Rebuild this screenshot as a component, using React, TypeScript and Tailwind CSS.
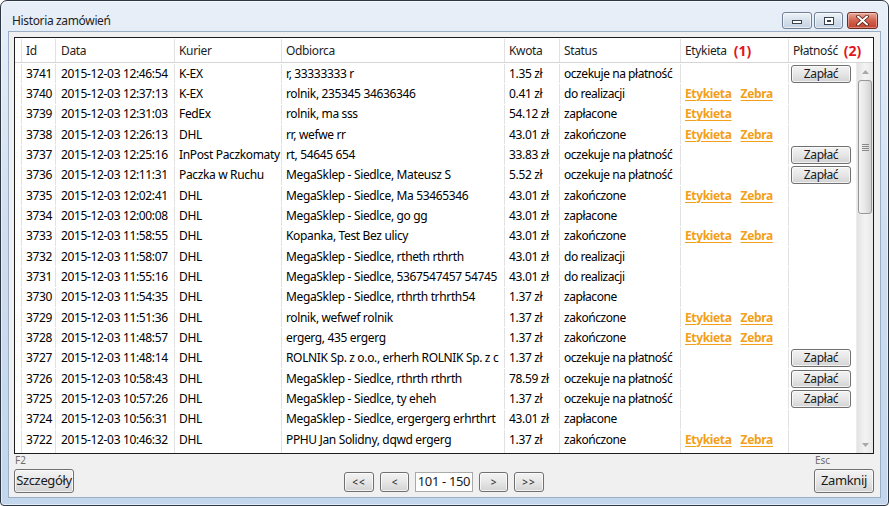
import React from "react";

type Row = {
  id: string;
  date: string;
  courier: string;
  rec: string;
  amt: string;
  status: string;
  label: 0 | 1 | 2;
  pay: boolean;
};

const rows: Row[] = [
  { id: "3741", date: "2015-12-03 12:46:54", courier: "K-EX", rec: "r, 33333333 r", amt: "1.35 zł", status: "oczekuje na płatność", label: 0, pay: true },
  { id: "3740", date: "2015-12-03 12:37:13", courier: "K-EX", rec: "rolnik, 235345 34636346", amt: "0.41 zł", status: "do realizacji", label: 2, pay: false },
  { id: "3739", date: "2015-12-03 12:31:03", courier: "FedEx", rec: "rolnik, ma sss", amt: "54.12 zł", status: "zapłacone", label: 1, pay: false },
  { id: "3738", date: "2015-12-03 12:26:13", courier: "DHL", rec: "rr, wefwe rr", amt: "43.01 zł", status: "zakończone", label: 2, pay: false },
  { id: "3737", date: "2015-12-03 12:25:16", courier: "InPost Paczkomaty", rec: "rt, 54645 654", amt: "33.83 zł", status: "oczekuje na płatność", label: 0, pay: true },
  { id: "3736", date: "2015-12-03 12:11:31", courier: "Paczka w Ruchu", rec: "MegaSklep - Siedlce, Mateusz S", amt: "5.52 zł", status: "oczekuje na płatność", label: 0, pay: true },
  { id: "3735", date: "2015-12-03 12:02:41", courier: "DHL", rec: "MegaSklep - Siedlce, Ma 53465346", amt: "43.01 zł", status: "zakończone", label: 2, pay: false },
  { id: "3734", date: "2015-12-03 12:00:08", courier: "DHL", rec: "MegaSklep - Siedlce, go gg", amt: "43.01 zł", status: "zapłacone", label: 0, pay: false },
  { id: "3733", date: "2015-12-03 11:58:55", courier: "DHL", rec: "Kopanka, Test Bez ulicy", amt: "43.01 zł", status: "zakończone", label: 2, pay: false },
  { id: "3732", date: "2015-12-03 11:58:07", courier: "DHL", rec: "MegaSklep - Siedlce, rtheth rthrth", amt: "43.01 zł", status: "do realizacji", label: 0, pay: false },
  { id: "3731", date: "2015-12-03 11:55:16", courier: "DHL", rec: "MegaSklep - Siedlce, 5367547457 54745", amt: "43.01 zł", status: "do realizacji", label: 0, pay: false },
  { id: "3730", date: "2015-12-03 11:54:35", courier: "DHL", rec: "MegaSklep - Siedlce, rthrth trhrth54", amt: "1.37 zł", status: "zapłacone", label: 0, pay: false },
  { id: "3729", date: "2015-12-03 11:51:36", courier: "DHL", rec: "rolnik, wefwef rolnik", amt: "1.37 zł", status: "zakończone", label: 2, pay: false },
  { id: "3728", date: "2015-12-03 11:48:57", courier: "DHL", rec: "ergerg, 435 ergerg", amt: "1.37 zł", status: "zakończone", label: 2, pay: false },
  { id: "3727", date: "2015-12-03 11:48:14", courier: "DHL", rec: "ROLNIK Sp. z o.o., erherh ROLNIK Sp. z c", amt: "1.37 zł", status: "oczekuje na płatność", label: 0, pay: true },
  { id: "3726", date: "2015-12-03 10:58:43", courier: "DHL", rec: "MegaSklep - Siedlce, rthrth rthrth", amt: "78.59 zł", status: "oczekuje na płatność", label: 0, pay: true },
  { id: "3725", date: "2015-12-03 10:57:26", courier: "DHL", rec: "MegaSklep - Siedlce, ty eheh", amt: "1.37 zł", status: "oczekuje na płatność", label: 0, pay: true },
  { id: "3724", date: "2015-12-03 10:56:31", courier: "DHL", rec: "MegaSklep - Siedlce, ergergerg erhrthrt", amt: "43.01 zł", status: "zapłacone", label: 0, pay: false },
  { id: "3722", date: "2015-12-03 10:46:32", courier: "DHL", rec: "PPHU Jan Solidny, dqwd ergerg", amt: "1.37 zł", status: "zakończone", label: 2, pay: false },
];

const cell = "h-full flex items-center overflow-hidden whitespace-nowrap border-r border-[#e2e2e2] pl-[4px]";

function WinButton({ children, className }: { children: React.ReactNode; className: string }) {
  return (
    <div
      className={
        "flex items-center justify-center rounded-[3px] border border-[#707070] bg-gradient-to-b from-[#f3f3f3] via-[#e6e6e6] to-[#d3d3d3] shadow-[inset_0_0_0_1px_rgba(255,255,255,0.7)] text-[#1a1a1a] " +
        className
      }
    >
      {children}
    </div>
  );
}

function Label({ kind }: { kind: 0 | 1 | 2 }) {
  if (kind === 0) return null;
  return (
    <div className="flex items-center gap-[9px] font-bold text-[#f2a01a] underline decoration-[1px] underline-offset-[2px]">
      <span>Etykieta</span>
      {kind === 2 && <span>Zebra</span>}
    </div>
  );
}

function DataRow({ r }: { r?: Row }) {
  return (
    <div className={"flex " + (r ? "h-[20.33px] shrink-0 pt-[1px]" : "flex-1 min-h-0")}>
      <div className="w-[7px] h-full border-r border-[#e2e2e2]" />
      <div className={cell + " w-[34px]"}>{r?.id}</div>
      <div className={cell + " w-[119px] pl-[5px]"}>{r?.date}</div>
      <div className={cell + " w-[107px]"}>{r?.courier}</div>
      <div className={cell + " w-[223px]"}>{r?.rec}</div>
      <div className={cell + " w-[55px]"}>{r?.amt}</div>
      <div className={cell + " w-[121px] tracking-[-0.45px]"}>{r?.status}</div>
      <div className={cell + " w-[108px] pl-[2px]"}>{r && <Label kind={r.label} />}</div>
      <div className="w-[67px] h-full flex items-center pl-[2px]">
        {r?.pay && <WinButton className="w-[60px] h-[18px] text-[12px]">Zapłać</WinButton>}
      </div>
    </div>
  );
}

function Scrollbar() {
  return (
    <div className="w-[17px] h-full flex flex-col bg-gradient-to-r from-[#e3e3e3] via-[#f3f3f3] to-[#e8e8e8] border-l border-[#ececec]">
      <div className="h-[17px] flex items-center justify-center shrink-0">
        <svg width="7" height="4" viewBox="0 0 7 4"><path d="M0 4 L3.5 0 L7 4 Z" fill="#a8a8a8" /></svg>
      </div>
      <div className="flex-1 flex flex-col">
        <div className="mx-[1px] h-[134px] rounded-[3px] border border-[#979797] bg-gradient-to-r from-[#f4f4f4] via-[#e7e7e7] to-[#d2d2d2] flex flex-col items-center justify-center gap-[1px]">
          <div className="w-[7px] h-[1px] bg-[#8a8a8a]" />
          <div className="w-[7px] h-[1px] bg-[#8a8a8a]" />
          <div className="w-[7px] h-[1px] bg-[#8a8a8a]" />
          <div className="w-[7px] h-[1px] bg-[#8a8a8a]" />
        </div>
      </div>
      <div className="h-[17px] flex items-center justify-center shrink-0">
        <svg width="7" height="4" viewBox="0 0 7 4"><path d="M0 0 L3.5 4 L7 0 Z" fill="#a8a8a8" /></svg>
      </div>
    </div>
  );
}

function CaptionButtons() {
  return (
    <div className="flex items-start mt-[11px] mr-[3px]">
      <div className="w-[30px] h-[17px] rounded-[3px] border border-[#6f7f95] bg-gradient-to-b from-[#eef3f9] via-[#d6e0ec] to-[#c4d2e3] shadow-[inset_0_0_0_1px_rgba(255,255,255,0.6)] flex items-end justify-center pb-[4px]">
        <div className="w-[10px] h-[4px] bg-white border border-[#39424e]" />
      </div>
      <div className="ml-[2px] w-[29px] h-[17px] rounded-[3px] border border-[#6f7f95] bg-gradient-to-b from-[#eef3f9] via-[#d6e0ec] to-[#c4d2e3] shadow-[inset_0_0_0_1px_rgba(255,255,255,0.6)] flex items-center justify-center">
        <div className="w-[10px] h-[8px] border border-[#39424e] bg-white flex items-center justify-center">
          <div className="w-[4px] h-[2px] border border-[#39424e] bg-[#ccd6e2]" />
        </div>
      </div>
      <div className="ml-[4px] w-[31px] h-[17px] rounded-[3px] border border-[#6b2a22] bg-gradient-to-b from-[#e9a99b] via-[#d2624e] to-[#c2412e] shadow-[inset_0_0_0_1px_rgba(255,255,255,0.35)] flex items-center justify-center">
        <svg width="13" height="11" viewBox="0 0 13 11">
          <path d="M2 1.5 L11 9.5 M11 1.5 L2 9.5" stroke="#4a1b14" strokeWidth="3.6" strokeLinecap="round" />
          <path d="M2 1.5 L11 9.5 M11 1.5 L2 9.5" stroke="#ffffff" strokeWidth="2" strokeLinecap="round" />
        </svg>
      </div>
    </div>
  );
}

export default function App() {
  return (
    <div className="w-[889px] h-[506px] bg-white font-['Noto_Sans',sans-serif] tracking-[-0.35px]">
      <div className="w-[889px] h-[506px] flex flex-col rounded-t-[7px] rounded-b-[4px] border border-[#2e3845] bg-gradient-to-b from-[#e8eff8] via-[#cfdced] to-[#c3d6ec] shadow-[inset_0_0_0_1px_rgba(255,255,255,0.55)] px-[7px] pb-[7px]">
        <div className="h-[30px] shrink-0 flex justify-between">
          <div className="pl-[4px] pt-[12px] text-[12px] leading-[16px] text-[#1e1e1e]">Historia zamówień</div>
          <CaptionButtons />
        </div>
        <div className="flex-1 min-h-0 flex flex-col border border-[#9aaec6] bg-[#f0f0f0]">
          <div className="ml-[5px] mr-[6px] mt-[5px] h-[417px] shrink-0 border border-[#1c1c1c] bg-white flex flex-col overflow-hidden text-[12px] text-black leading-none">
            <div className="flex h-[25px] shrink-0 border-b border-[#d5d5d5] text-[#1e1e1e] pt-[1px]">
              <div className="w-[7px] h-full border-r border-[#e2e2e2]" />
              <div className={cell + " w-[34px]"}>Id</div>
              <div className={cell + " w-[119px] pl-[5px]"}>Data</div>
              <div className={cell + " w-[107px]"}>Kurier</div>
              <div className={cell + " w-[223px]"}>Odbiorca</div>
              <div className={cell + " w-[55px]"}>Kwota</div>
              <div className={cell + " w-[121px]"}>Status</div>
              <div className={cell + " w-[108px] gap-[7px]"}>
                <span>Etykieta</span>
                <span className="font-bold text-[14px] tracking-normal text-[#e3151b]">(1)</span>
              </div>
              <div className="w-[84px] h-full flex items-center pl-[4px] gap-[6px] whitespace-nowrap">
                <span>Płatność</span>
                <span className="font-bold text-[14px] tracking-normal text-[#e3151b]">(2)</span>
              </div>
            </div>
            <div className="flex-1 min-h-0 flex">
              <div className="flex-1 flex flex-col">
                {rows.map((r) => (
                  <DataRow key={r.id} r={r} />
                ))}
                <DataRow />
              </div>
              <Scrollbar />
            </div>
          </div>
          <div className="flex-1 flex items-end justify-between pb-[4px] pl-[5px] pr-[6px]">
            <div className="flex flex-col">
              <div className="text-[10px] leading-[10px] text-[#6d6d6d] pl-[1px] mb-[4px] tracking-normal">F2</div>
              <WinButton className="w-[60px] h-[24px] text-[13px]">Szczegóły</WinButton>
            </div>
            <div className="flex items-center gap-[6px] mb-[1px] text-[12px]">
              <WinButton className="w-[30px] h-[20px] text-[10px] tracking-[1px]">&lt;&lt;</WinButton>
              <WinButton className="w-[29px] h-[20px] text-[10px]">&lt;</WinButton>
              <div className="w-[58px] h-[20px] border border-[#a9a9a9] bg-white flex items-center justify-center text-[13px] text-[#1a1a1a]">101 - 150</div>
              <WinButton className="w-[29px] h-[20px] text-[10px]">&gt;</WinButton>
              <WinButton className="w-[30px] h-[20px] text-[10px] tracking-[1px]">&gt;&gt;</WinButton>
            </div>
            <div className="flex flex-col">
              <div className="text-[10px] leading-[10px] text-[#6d6d6d] pl-[1px] mb-[4px] tracking-normal">Esc</div>
              <WinButton className="w-[60px] h-[24px] text-[13px]">Zamknij</WinButton>
            </div>
          </div>
        </div>
      </div>
    </div>
  );
}
